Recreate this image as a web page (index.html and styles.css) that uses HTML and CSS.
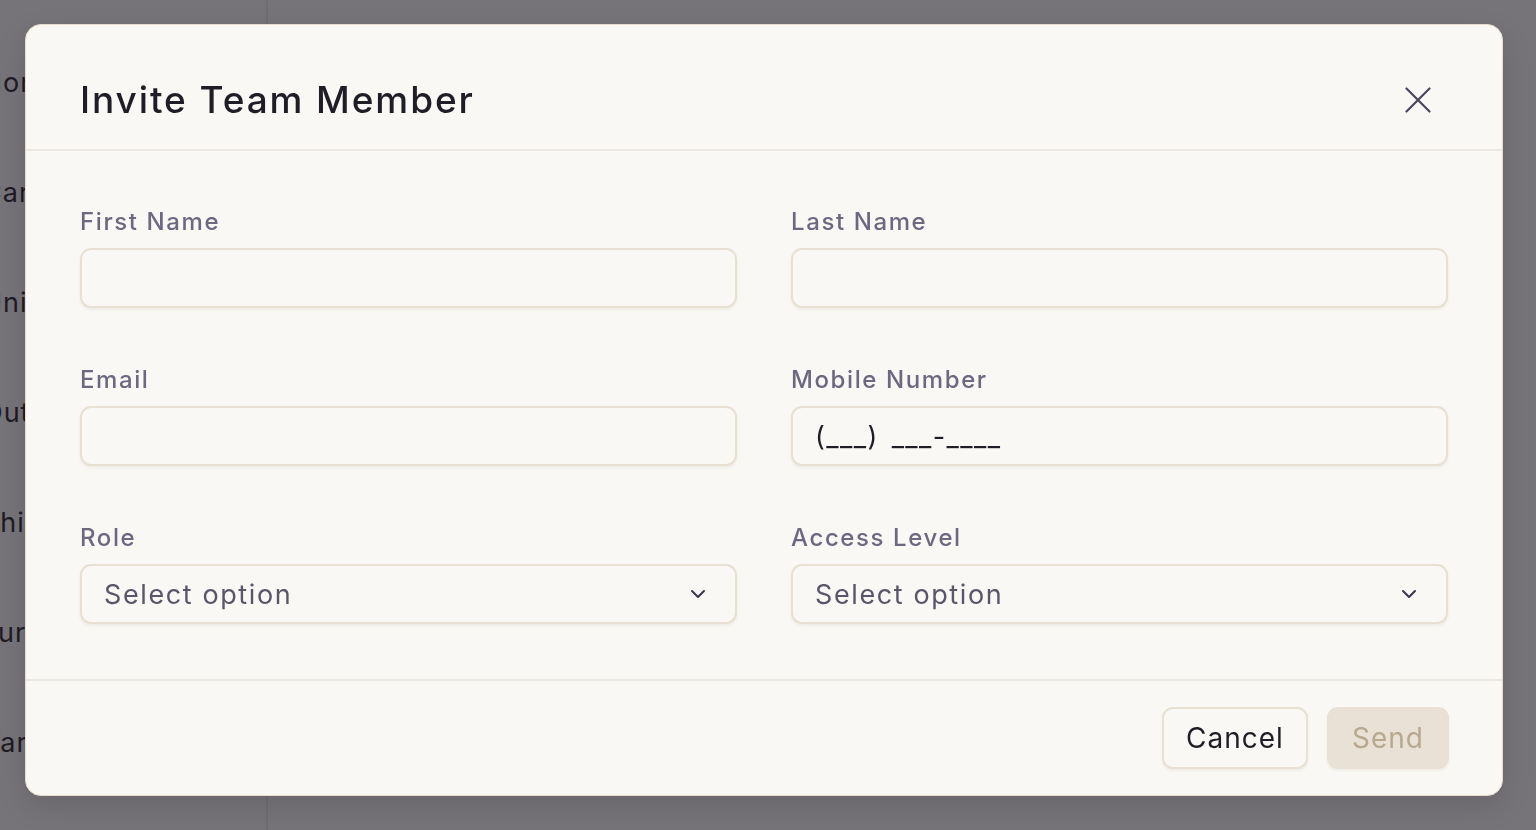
FILE: index.html
```html
<!DOCTYPE html>
<html lang="en">

<head>
    <meta charset="UTF-8">
    <meta name="viewport" content="width=device-width, initial-scale=1.0">
    <title>Invite Team Member</title>
    <link rel="stylesheet" href="styles.css">
</head>

<body>
    <div class="app">
        <nav class="sidebar">
            <a class="nav-item" href="#">Home</a>
            <a class="nav-item" href="#">Cards</a>
            <a class="nav-item" href="#">Units</a>
            <a class="nav-item" href="#">Outlets</a>
            <a class="nav-item" href="#">Shipping</a>
            <a class="nav-item" href="#">Furniture</a>
            <a class="nav-item" href="#">Variants</a>
        </nav>
        <main class="content"></main>
    </div>

    <div class="overlay"></div>

    <div class="modal">
        <div class="modal-header">
            <h1 class="modal-title">Invite Team Member</h1>
            <button class="close-btn" aria-label="Close">
                <svg width="26" height="26" viewBox="0 0 26 26" fill="none" stroke="currentColor" stroke-width="2.2" stroke-linecap="round">
                    <path d="M1.5 1.5 L24.5 24.5 M24.5 1.5 L1.5 24.5" />
                </svg>
            </button>
        </div>

        <form class="modal-body">
            <div class="field">
                <label>First Name</label>
                <input type="text" class="input">
            </div>
            <div class="field">
                <label>Last Name</label>
                <input type="text" class="input">
            </div>
            <div class="field">
                <label>Email</label>
                <input type="text" class="input">
            </div>
            <div class="field">
                <label>Mobile Number</label>
                <input type="text" class="input phone" value="(___) ___-____">
            </div>
            <div class="field">
                <label>Role</label>
                <div class="select">
                    <span>Select option</span>
                    <svg width="16" height="10" viewBox="0 0 16 10" fill="none" stroke="currentColor" stroke-width="2" stroke-linecap="round" stroke-linejoin="round">
                        <path d="M2 2 L8 8 L14 2" />
                    </svg>
                </div>
            </div>
            <div class="field">
                <label>Access Level</label>
                <div class="select">
                    <span>Select option</span>
                    <svg width="16" height="10" viewBox="0 0 16 10" fill="none" stroke="currentColor" stroke-width="2" stroke-linecap="round" stroke-linejoin="round">
                        <path d="M2 2 L8 8 L14 2" />
                    </svg>
                </div>
            </div>
        </form>

        <div class="modal-footer">
            <button class="btn btn-cancel">Cancel</button>
            <button class="btn btn-send" disabled>Send</button>
        </div>
    </div>
</body>

</html>
```

FILE: styles.css
```css
* {
    margin: 0;
    padding: 0;
    box-sizing: border-box;
}

body {
    font-family: Inter, "Noto Sans", sans-serif;
    background: #f9f8f4;
    height: 100vh;
    overflow: hidden;
}

.app {
    display: flex;
    height: 100vh;
}

.sidebar {
    width: 268px;
    border-right: 2px solid #ebe6dc;
    display: flex;
    flex-direction: column;
    gap: 76px;
    padding-top: 66px;
    overflow: hidden;
}

.nav-item {
    font-size: 27px;
    line-height: 34px;
    color: #1e1c24;
    text-decoration: none;
    margin-left: -18px;
    letter-spacing: 1px;
}

.content {
    flex: 1;
}

.overlay {
    position: fixed;
    inset: 0;
    background: rgba(30, 27, 38, 0.6);
}

.modal {
    position: fixed;
    top: 24px;
    left: 25px;
    width: 1478px;
    height: 772px;
    background: #f9f8f4;
    border: 1px solid #e6dccb;
    border-radius: 16px;
    display: flex;
    flex-direction: column;
    box-shadow: 0 10px 30px rgba(0, 0, 0, 0.12);
}

.modal-header {
    height: 126px;
    padding: 50px 54px 0;
    border-bottom: 2px solid #ece8e1;
    display: flex;
    justify-content: space-between;
    align-items: flex-start;
}

.modal-title {
    font-size: 37px;
    font-weight: 500;
    line-height: 50px;
    color: #1f1e26;
    letter-spacing: 1.9px;
}

.close-btn {
    background: none;
    border: none;
    color: #4a4660;
    margin-top: 12px;
    margin-right: 17px;
    cursor: pointer;
}

.modal-body {
    display: grid;
    grid-template-columns: 1fr 1fr;
    column-gap: 54px;
    row-gap: 54px;
    padding: 53px 54px 54px;
}

.field {
    display: flex;
    flex-direction: column;
    gap: 8px;
}

.field label {
    font-size: 24px;
    line-height: 36px;
    font-weight: 500;
    color: #6b6880;
    letter-spacing: 1.6px;
}

.input,
.select {
    height: 60px;
    border: 2px solid #e8e0d2;
    border-radius: 11px;
    background: #f9f8f4;
    box-shadow: 0 2px 3px rgba(120, 100, 70, 0.08);
    font-family: inherit;
    font-size: 27px;
    padding: 0 22px;
    color: #1f1e26;
    outline: none;
}

.phone {
    letter-spacing: 1.4px;
    word-spacing: 4px;
}

.select {
    display: flex;
    align-items: center;
    justify-content: space-between;
    color: #5a566a;
    letter-spacing: 1.6px;
}

.select svg {
    color: #3a3650;
    margin-right: 7px;
}

.modal-footer {
    margin-top: auto;
    border-top: 2px solid #ece8e1;
    padding: 26px 53px 26px;
    display: flex;
    justify-content: flex-end;
    gap: 19px;
}

.btn {
    height: 62px;
    border-radius: 11px;
    font-family: inherit;
    font-size: 28px;
    letter-spacing: 1px;
}

.btn-cancel {
    width: 146px;
    background: #f9f8f4;
    border: 2px solid #e8e0d2;
    color: #1f1e26;
    box-shadow: 0 2px 3px rgba(120, 100, 70, 0.08);
}

.btn-send {
    width: 122px;
    background: #e9e1d5;
    border: none;
    color: #b9a890;
    box-shadow: 0 2px 3px rgba(120, 100, 70, 0.08);
}
```
